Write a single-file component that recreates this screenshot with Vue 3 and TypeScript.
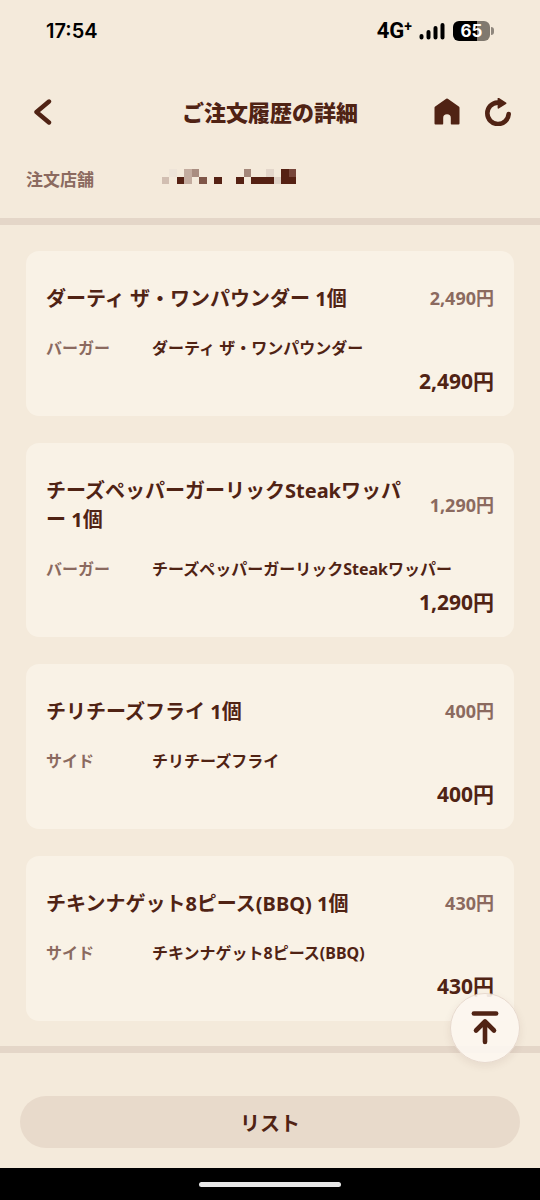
<script setup lang="ts">
interface OrderItem {
  name: string
  price: string
  kind: string
  detail: string
  total: string
}

interface Cell {
  x: number
  y: number
  w: number
  fill: string
}

const items: OrderItem[] = [
  { name: 'ダーティ ザ・ワンパウンダー 1個', price: '2,490円', kind: 'バーガー', detail: 'ダーティ ザ・ワンパウンダー', total: '2,490円' },
  { name: 'チーズペッパーガーリックSteakワッパー 1個', price: '1,290円', kind: 'バーガー', detail: 'チーズペッパーガーリックSteakワッパー', total: '1,290円' },
  { name: 'チリチーズフライ 1個', price: '400円', kind: 'サイド', detail: 'チリチーズフライ', total: '400円' },
  { name: 'チキンナゲット8ピース(BBQ) 1個', price: '430円', kind: 'サイド', detail: 'チキンナゲット8ピース(BBQ)', total: '430円' },
]

const cells: Cell[] = [
  { x: 1, y: 0, w: 1, fill: '#eee4d8' },
  { x: 3, y: 0, w: 1, fill: '#c3ac9f' },
  { x: 4, y: 0, w: 1, fill: '#a98d80' },
  { x: 11, y: 0, w: 1, fill: '#a4877a' },
  { x: 14, y: 0, w: 1, fill: '#e3d6ca' },
  { x: 16, y: 0, w: 1, fill: '#552113' },
  { x: 17, y: 0, w: 1, fill: '#77463a' },
  { x: 0, y: 1, w: 1, fill: '#d1beb1' },
  { x: 2, y: 1, w: 1, fill: '#552113' },
  { x: 3, y: 1, w: 1, fill: '#c3ac9f' },
  { x: 5, y: 1, w: 1, fill: '#7f5648' },
  { x: 7, y: 1, w: 1, fill: '#552113' },
  { x: 10, y: 1, w: 1, fill: '#552113' },
  { x: 12, y: 1, w: 3, fill: '#552113' },
  { x: 15, y: 1, w: 1, fill: '#dfd2c6' },
  { x: 16, y: 1, w: 2, fill: '#552113' },
]

function toTop(): void {
  window.scrollTo({ top: 0, behavior: 'smooth' })
}
</script>

<template>
  <div class="page">
    <div class="status">
      <span class="clock">17:54</span>
      <div class="indicators">
        <span class="network">4G<sup>+</sup></span>
        <svg class="signal" width="26" height="20" viewBox="0 0 26 20" aria-hidden="true">
          <g stroke="#000" stroke-width="4" stroke-linecap="round">
            <path d="M2.500 15v1.500M9.500 11v5.500M16.500 7v9.500M23.500 4v12.500" />
          </g>
        </svg>
        <div class="battery"><span>65</span></div>
      </div>
    </div>

    <header class="header">
      <button class="icon back" type="button" aria-label="戻る">
        <svg width="18" height="26" viewBox="0 0 18 26" aria-hidden="true">
          <path d="M15 2.500L2.500 13L15 23.500" fill="none" stroke="#502314" stroke-width="4.400" stroke-linecap="round" stroke-linejoin="round" />
        </svg>
      </button>
      <h1>ご注文履歴の詳細</h1>
      <div class="actions">
        <button class="icon" type="button" aria-label="ホーム">
          <svg width="26" height="28" viewBox="0 0 26 28" aria-hidden="true">
            <path d="M12.200.8q.8-.6 1.600 0l11 7.600q.7.500.7 1.400V25.500q0 1-1 1h-7q-.7 0-.7-.7V20q0-3.700-3.800-3.700T9.200 20v5.800q0 .7-.7.700h-7q-1 0-1-1V9.800q0-.9.700-1.400z" fill="#502314" />
          </svg>
        </button>
        <button class="icon" type="button" aria-label="更新">
          <svg width="28" height="28" viewBox="0 0 28 28" aria-hidden="true">
            <path d="M15.500 4.600H13.500A10.700 10.700 0 1 0 24.700 16" fill="none" stroke="#502314" stroke-width="4.600" stroke-linecap="round" />
            <path d="M13.600.6V9.800q.1 1.200 1.200.7l7.200-4.600q.9-.8 0-1.500L14.900-.1q-1.200-.5-1.300.7z" fill="#502314" />
          </svg>
        </button>
      </div>
    </header>

    <dl class="store">
      <dt>注文店舗</dt>
      <dd>
        <svg width="134" height="15" viewBox="0 0 18 2" preserveAspectRatio="none" shape-rendering="crispEdges" aria-hidden="true">
          <rect v-for="(c, i) in cells" :key="i" :x="c.x" :y="c.y" :width="c.w" height="1" :fill="c.fill" />
        </svg>
      </dd>
    </dl>

    <main class="list">
      <article v-for="item in items" :key="item.name" class="card">
        <div class="head">
          <h2>{{ item.name }}</h2>
          <span class="price">{{ item.price }}</span>
        </div>
        <dl class="detail">
          <dt>{{ item.kind }}</dt>
          <dd>{{ item.detail }}</dd>
        </dl>
        <p class="total">{{ item.total }}</p>
      </article>
    </main>

    <footer class="footer">
      <button class="list-button" type="button">リスト</button>
    </footer>
    <div class="home-area"><div class="home-bar"></div></div>

    <button class="to-top" type="button" aria-label="ページの先頭へ" @click="toTop">
      <svg width="28" height="36" viewBox="0 0 28 36" aria-hidden="true">
        <g fill="none" stroke="#502314" stroke-width="4.600" stroke-linecap="round" stroke-linejoin="round">
          <path d="M2.800 3.500h22.400" stroke-width="4.400" />
          <path d="M14 32V11.500M5 20.500L14 11.500L23 20.500" />
        </g>
      </svg>
    </button>
  </div>
</template>

<style>
body {
  margin: 0;
  background: #f4eadb;
}
</style>

<style scoped>
.page {
  display: flex;
  flex-direction: column;
  min-height: 100vh;
  background: #f4eadb;
  color: #502314;
  font-family: "Noto Sans", "Noto Sans CJK JP", sans-serif;
  font-weight: 700;
}
h1, h2, p, dl, dd {
  margin: 0;
}
button {
  border: 0;
  padding: 0;
  font: inherit;
  color: inherit;
  background: none;
  cursor: pointer;
}
svg {
  display: block;
}
.status {
  display: flex;
  justify-content: space-between;
  align-items: center;
  height: 62px;
  padding: 0 50px 0 46px;
  color: #000;
}
.clock {
  font: 600 20px/24px Inter, sans-serif;
}
.indicators {
  display: flex;
  align-items: center;
}
.network {
  display: flex;
  margin-right: 7px;
  font: 700 22px/24px Roboto, sans-serif;
}
.network sup {
  font-size: 14px;
  line-height: 14px;
}
.battery {
  position: relative;
  width: 37px;
  height: 20px;
  margin-left: 8px;
  border-radius: 6px;
  background: linear-gradient(90deg, #000 65%, #80796f 65%);
  color: #fff;
  font: 700 17px/20px Inter, sans-serif;
  text-align: center;
}
.battery::after {
  content: "";
  position: absolute;
  left: 38px;
  top: 6px;
  width: 3px;
  height: 8px;
  border-radius: 0 3px 3px 0;
  background: #8f877d;
}
.header {
  display: grid;
  grid-template-columns: 1fr auto 1fr;
  align-items: center;
  height: 50px;
  padding: 25px 28px 30px;
}
h1 {
  font-size: 22px;
  line-height: 32px;
  font-weight: 900;
}
.back {
  justify-self: start;
  padding-left: 6px;
}
.actions {
  display: flex;
  justify-content: flex-end;
  gap: 24px;
}
.store {
  display: flex;
  align-items: flex-start;
  padding: 0 26px 25px;
  border-bottom: 7px solid #e4d6c8;
  font-size: 17px;
  line-height: 26px;
}
.store dt {
  width: 136px;
}
.store dd {
  padding-top: 2px;
}
dt, .price {
  color: #8b6a5f;
}
.list {
  display: flex;
  flex: 1;
  flex-direction: column;
  gap: 27px;
  padding: 26px 26px 25px;
}
.card {
  padding: 33px 20px 20px;
  border-radius: 13px;
  background: #f9f2e6;
}
.head {
  display: flex;
  align-items: center;
  justify-content: space-between;
  gap: 24px;
  margin-bottom: 23px;
}
h2 {
  font-size: 20px;
  line-height: 29px;
  font-weight: 700;
  word-break: break-all;
}
.price {
  flex: none;
  font-size: 18px;
  line-height: 29px;
}
.detail {
  display: flex;
  margin-bottom: 6px;
  font-size: 16px;
  line-height: 24px;
}
.detail dt {
  width: 106px;
}
.total {
  font-size: 21px;
  line-height: 30px;
  text-align: right;
}
.footer {
  padding: 43px 20px 20px;
  border-top: 7px solid #e4d6c8;
}
.list-button {
  display: block;
  width: 100%;
  height: 52px;
  border-radius: 26px;
  background: #e8dacb;
  font-size: 20px;
}
.home-area {
  display: flex;
  justify-content: center;
  padding: 14px 0 13px;
  background: #000;
}
.home-bar {
  width: 142px;
  height: 5px;
  border-radius: 3px;
  background: #e8e8e8;
}
.to-top {
  position: fixed;
  right: 20px;
  bottom: 137px;
  display: flex;
  align-items: center;
  justify-content: center;
  width: 70px;
  height: 70px;
  border: 1px solid #e6d8cd;
  border-radius: 50%;
  background: rgba(252, 246, 240, 0.92);
  box-shadow: 0 3px 8px rgba(80, 35, 20, 0.08);
}
</style>
